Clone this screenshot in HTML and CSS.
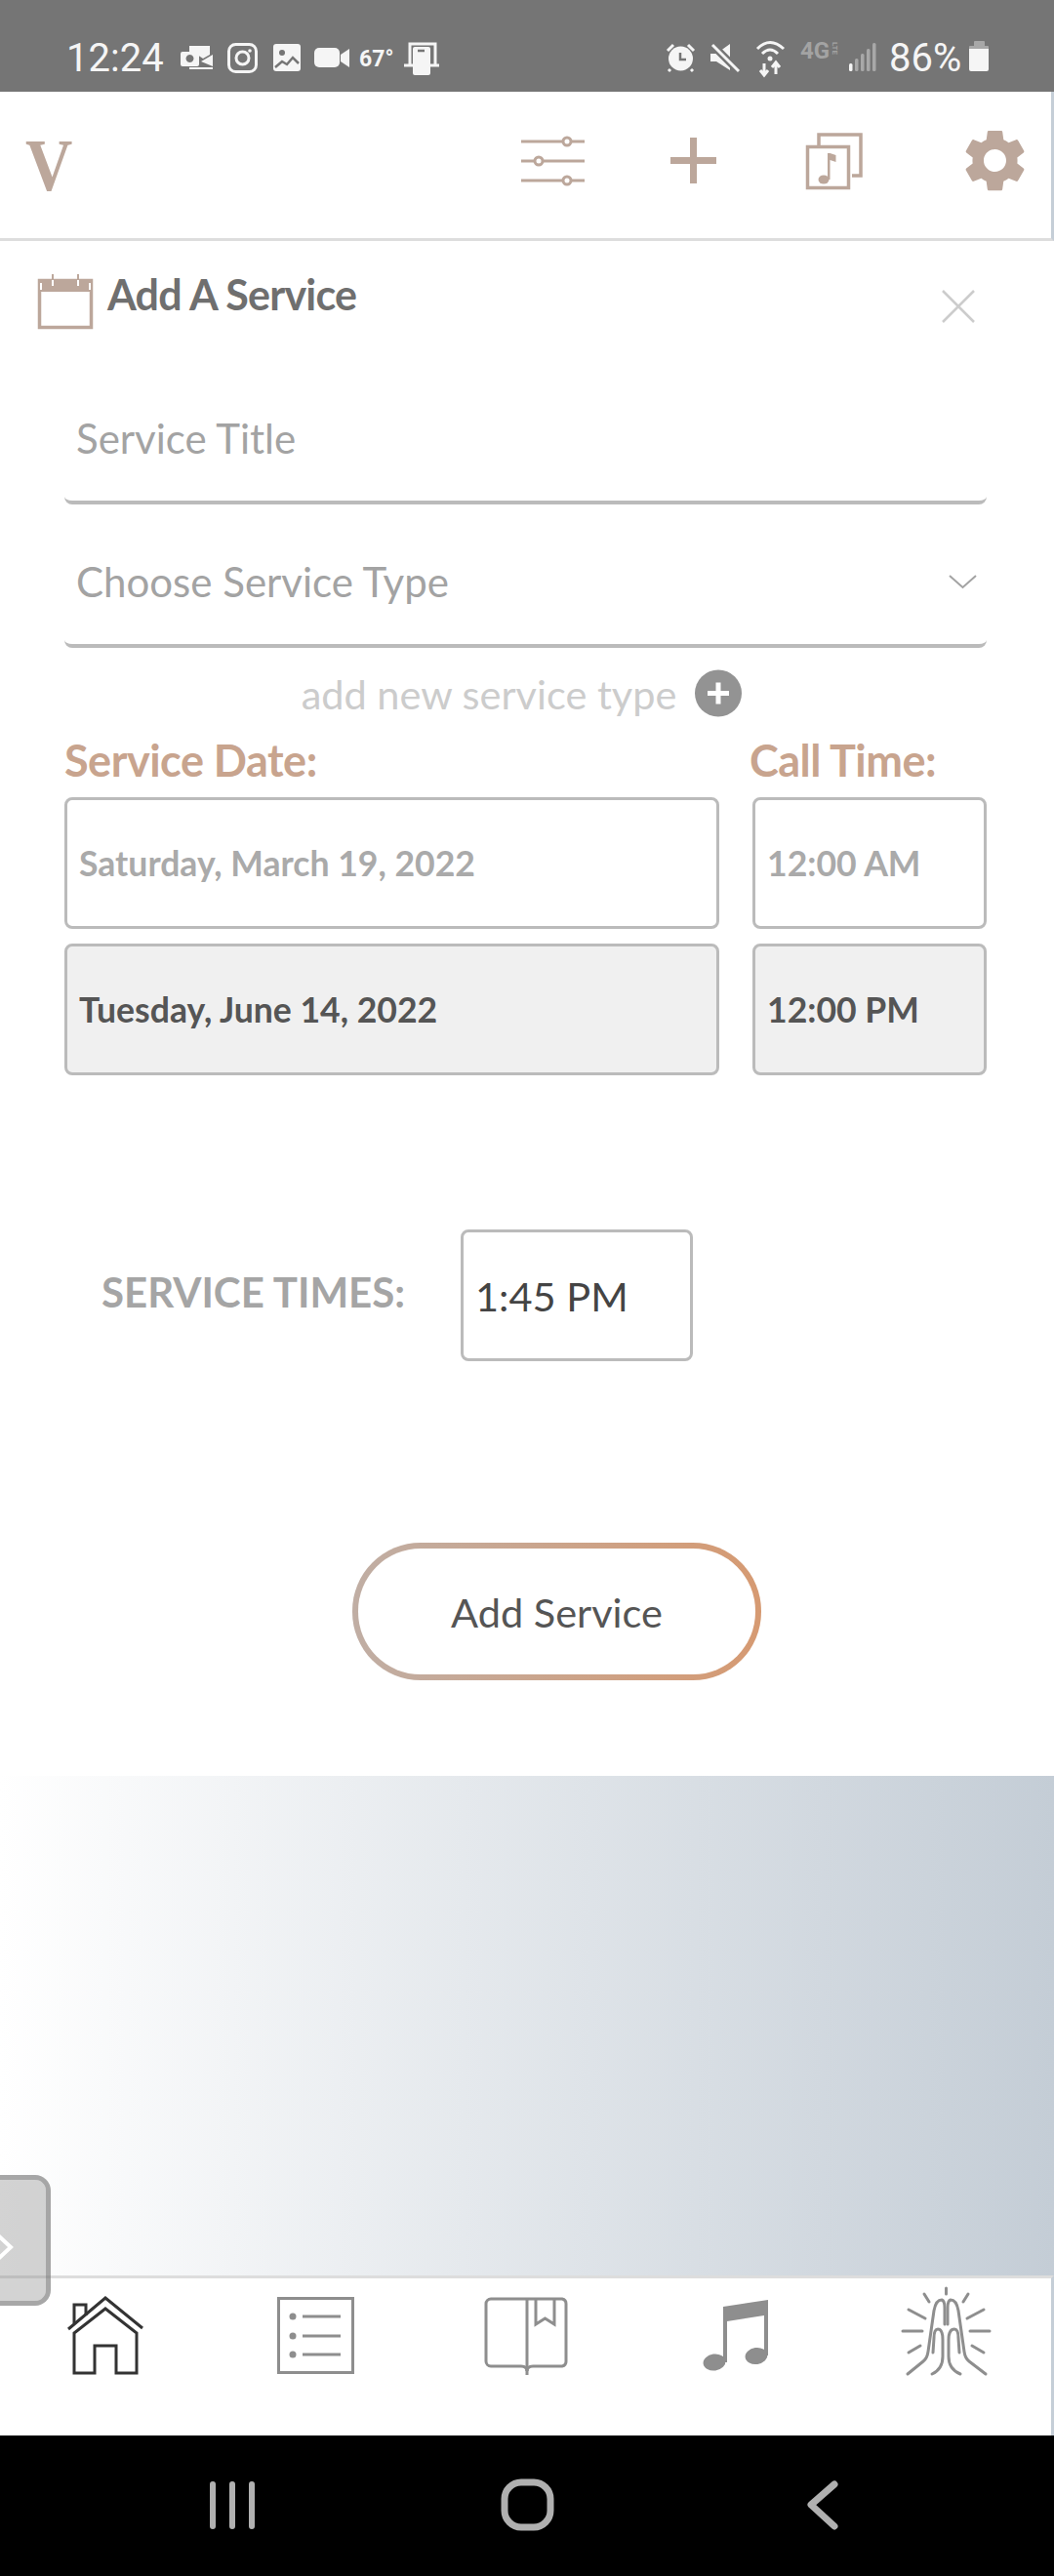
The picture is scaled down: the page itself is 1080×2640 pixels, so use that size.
FILE: index.html
```html
<!DOCTYPE html>
<html lang="en">
  <head>
    <meta charset="UTF-8" />
    <title>Add A Service</title>
    <link rel="stylesheet" href="styles.css">
  </head>
  <body>
    <div class="page">

      <!-- Status bar: svg viewBoxes use the screen coordinates -->
      <div class="status">
        <span class="st-time">12:24</span>
        <svg width="50" height="40" viewBox="176 40 50 40" class="st-fill">
          <path d="M194 47h21v9l-7 4-6-4h-8z"/>
          <path d="M206 63l12-7v12z"/>
          <path d="M194 69h24v2h-24z"/>
          <path fill-rule="evenodd" d="M187 53h15a2 2 0 0 1 2 2v11a2 2 0 0 1-2 2h-15a2 2 0 0 1-2-2v-11a2 2 0 0 1 2-2zM194.500 56a4 4 0 1 0 .01 0z"/>
        </svg>
        <svg width="46" height="40" viewBox="226 40 46 40" class="st-line">
          <rect x="234.500" y="45.500" width="28" height="28" rx="7"/>
          <circle cx="248.500" cy="59.500" r="6.500"/>
          <circle cx="256" cy="52" r="1.800" class="st-fill"/>
        </svg>
        <svg width="44" height="40" viewBox="272 40 44 40" class="st-fill">
          <rect x="280" y="45" width="28" height="28" rx="3"/>
          <circle cx="289" cy="54" r="3" class="st-gray"/>
          <path d="M282 69l7-6 5 3 6-7 6 6" class="st-gap"/>
        </svg>
        <svg width="48" height="40" viewBox="316 40 48 40" class="st-fill">
          <rect x="322" y="49" width="26" height="20" rx="5"/>
          <path d="M349 56l9-6v19l-9-6z"/>
        </svg>
        <span class="st-temp">67°</span>
        <svg width="44" height="40" viewBox="410 40 44 40" class="st-line">
          <path d="M420 67V45h26v22"/>
          <path d="M414 67h10M441 67h9"/>
          <rect x="423" y="48" width="18" height="29" rx="2" class="st-fill"/>
          <path d="M428 52h7" class="st-gap"/>
        </svg>

        <div class="st-right">
          <svg width="42" height="40" viewBox="678 40 42 40" class="st-fill">
            <circle cx="697.500" cy="60" r="12.500"/>
            <path d="M684 52l6-6M711 52l-6-6M687 71l-2 2M708 71l2 2" class="st-line"/>
            <path d="M697 54v7h6" class="st-gap"/>
          </svg>
          <svg width="46" height="40" viewBox="720 40 46 40" class="st-fill">
            <path d="M728 55h6l14-10v27l-14-9h-6z"/>
            <path d="M730 46l27 27" class="st-gap-wide"/>
            <path d="M730 46l27 27" class="st-line"/>
          </svg>
          <svg width="49" height="40" viewBox="766 40 49 40" class="st-line">
            <path d="M776 50q13-13 27 0M781 55q8-8 16 0"/>
            <circle cx="789" cy="60" r="2.500" class="st-fill"/>
            <path d="M783 65v11M779 72l4 5 4-5M795 76v-11M791 69l4-5 4 5"/>
          </svg>
          <svg width="51" height="60" viewBox="815 30 51 60" class="st-dim">
            <text x="820" y="60" class="st-4g">4G</text>
            <text x="853" y="43" class="st-lte" transform="rotate(90 853 43)">LTE</text>
          </svg>
          <svg width="39" height="40" viewBox="866 40 39 40" class="st-fill">
            <rect x="870" y="65" width="3.500" height="8" rx="1.500"/>
            <rect x="876" y="60" width="3.500" height="13" rx="1.500" class="st-bar"/>
            <rect x="882" y="55" width="3.500" height="18" rx="1.500" class="st-bar"/>
            <rect x="888" y="50" width="3.500" height="23" rx="1.500" class="st-bar"/>
            <rect x="894" y="44" width="3.500" height="29" rx="1.500" class="st-bar"/>
          </svg>
          <span class="st-pct">86%</span>
          <svg width="30" height="40" viewBox="988 40 30 40" class="st-fill">
            <path d="M999 42h9a1 1 0 0 1 1 1v4h3a1 1 0 0 1 1 1v3h-20v-3a1 1 0 0 1 1-1h4v-4a1 1 0 0 1 1-1z" class="st-bar"/>
            <path d="M993 50h20v21a2 2 0 0 1-2 2h-16a2 2 0 0 1-2-2z"/>
          </svg>
        </div>
      </div>

      <!-- App header -->
      <div class="topbar">
        <span class="logo">V</span>
        <div class="topbar-icons">
          <svg width="140" height="70" viewBox="500 134 140 70" class="tan-line">
            <path d="M534 145h42M586 145h13M534 165h13M557 165h42M534 185h42M586 185h13"/>
            <circle cx="581" cy="145" r="4"/>
            <circle cx="552" cy="165" r="4"/>
            <circle cx="581" cy="185" r="4"/>
          </svg>
          <svg width="140" height="70" viewBox="640 134 140 70" class="tan-fill">
            <path d="M707 141h7v20h20v7h-20v20h-7v-20h-20v-7h20z"/>
          </svg>
          <svg width="150" height="70" viewBox="780 134 150 70" class="tan-line tan-thick">
            <path d="M839 149v-11h43v42h-9"/>
            <rect x="827.500" y="150.500" width="42" height="42"/>
            <ellipse cx="844" cy="184" rx="5.500" ry="4.500" class="tan-fill"/>
            <path d="M848 184v-27h2.500l6 2v7l-6-2v20z" class="tan-fill"/>
          </svg>
          <svg width="147" height="70" viewBox="930 134 147 70" class="tan-fill">
            <path transform="translate(981.100 126.100) scale(3.200)" d="M19.140 12.940c.04-.3.06-.61.06-.94 0-.32-.02-.64-.07-.94l2.030-1.580c.18-.14.23-.41.12-.61l-1.920-3.320c-.12-.22-.37-.29-.59-.22l-2.390.96c-.5-.38-1.030-.7-1.620-.94l-.36-2.540c-.04-.24-.24-.41-.48-.41h-3.840c-.24 0-.43.17-.47.41l-.36 2.540c-.59.24-1.130.57-1.620.94l-2.390-.96c-.22-.08-.47 0-.59.22L2.740 8.870c-.12.21-.08.47.12.61l2.030 1.580c-.05.3-.09.63-.09.94s.02.64.07.94l-2.030 1.580c-.18.14-.23.41-.12.61l1.920 3.320c.12.22.37.29.59.22l2.390-.96c.5.38 1.030.7 1.620.94l.36 2.54c.05.24.24.41.48.41h3.840c.24 0 .44-.17.47-.41l.36-2.540c.59-.24 1.130-.56 1.620-.94l2.390.96c.22.08.47 0 .59-.22l1.920-3.320c.12-.22.07-.47-.12-.61l-2.010-1.580zM12 15.600c-1.980 0-3.600-1.620-3.600-3.600s1.620-3.600 3.600-3.600 3.600 1.620 3.600 3.600-1.620 3.600-3.600 3.600z"/>
          </svg>
        </div>
      </div>

      <!-- Form -->
      <div class="form">
        <div class="form-title">
          <svg width="58" height="58" viewBox="38 280 58 58" class="tan-line tan-thick">
            <rect x="40.500" y="287.500" width="53" height="48"/>
            <rect x="40" y="286" width="54" height="13" class="tan-fill"/>
            <path d="M42 290v7M92 290v7" class="white-line"/>
            <path d="M54 281v6M80 281v6" class="tan-thin"/>
            <path d="M54 287v6M80 287v6" class="white-line"/>
          </svg>
          <h1>Add A Service</h1>
          <svg width="40" height="40" viewBox="963 294 40 40" class="close">
            <path d="M967 298l32 32M999 298l-32 32"/>
          </svg>
        </div>

        <div class="field">Service Title</div>
        <div class="field field-select">
          Choose Service Type
          <svg width="32" height="20" viewBox="973 586 32 20" class="chevron">
            <path d="M975 590l13.500 12 13.500-12"/>
          </svg>
        </div>

        <div class="add-type">
          <span>add new service type</span>
          <svg width="48" height="49" viewBox="711 686 48 49">
            <circle cx="735" cy="710.500" r="24" class="plus-disc"/>
            <path d="M724 710.500h22M735 699.500v22" class="plus-mark"/>
          </svg>
        </div>

        <div class="dates">
          <div class="dates-label">Service Date:</div>
          <div class="dates-label dates-label-call">Call Time:</div>
          <div class="box">Saturday, March 19, 2022</div>
          <div class="box">12:00 AM</div>
          <div class="box box-on">Tuesday, June 14, 2022</div>
          <div class="box box-on">12:00 PM</div>
        </div>

        <div class="times">
          <div class="times-label">SERVICE TIMES:</div>
          <div class="box times-box">1:45 PM</div>
        </div>

        <div class="submit">Add Service</div>
      </div>

      <div class="band"></div>

      <!-- Bottom tabs -->
      <div class="tabs">
        <svg width="216" height="161" viewBox="0 2335 216 161" class="tab-home">
          <path d="M70 2387l38-32 38 31"/>
          <path d="M76 2432v-41l32-25 32 25v41h-21v-28h-22v28z"/>
          <path d="M76 2381v-19h12v11"/>
        </svg>
        <svg width="216" height="161" viewBox="216 2335 216 161" class="tab-icon">
          <rect x="285.500" y="2355.500" width="76" height="76"/>
          <circle cx="300" cy="2374" r="3.500" class="tab-fill"/>
          <circle cx="300" cy="2394" r="3.500" class="tab-fill"/>
          <circle cx="300" cy="2413" r="3.500" class="tab-fill"/>
          <path d="M310 2374h39M310 2394h39M310 2413h39"/>
        </svg>
        <svg width="216" height="161" viewBox="432 2335 216 161" class="tab-icon">
          <path d="M540 2356h-37a5 5 0 0 0-5 5v59a5 5 0 0 0 5 5h31q6 0 6 5v4"/>
          <path d="M540 2356h36a5 5 0 0 1 4 5v59a5 5 0 0 1-4 5h-30q-6 0-6 5"/>
          <path d="M540 2356v74"/>
          <path d="M549 2356v26l9.500-6 9.500 6v-26"/>
        </svg>
        <svg width="216" height="161" viewBox="648 2335 216 161" class="tab-fill">
          <path d="M741 2364l46-7v57h-4v-41l-38 6v42h-4z"/>
          <ellipse cx="732" cy="2421" rx="11.500" ry="8.500" transform="rotate(-8 732 2421)"/>
          <ellipse cx="775" cy="2414.500" rx="11.500" ry="8.500" transform="rotate(-8 775 2414.500)"/>
        </svg>
        <svg width="213" height="161" viewBox="864 2335 213 161" class="tab-icon tab-round">
          <path d="M969.500 2345v6M947 2351l5 8M992 2351l-5 8M931 2367l17 9M1008 2367l-17 9M925 2389h20M994 2389h20M931 2411l12-7M1008 2411l-12-7"/>
          <path d="M930 2433l16-13q4-3 5-10l6-42q2-11 8-11 3 1 3 8v17"/>
          <path d="M1010 2433l-17-13q-4-3-5-10l-6-42q-2-11-8-11-3 1-3 8v17"/>
          <path d="M955 2433q11-5 11-18v-17q0-11-5-11-4 0-4 9l-1 15"/>
          <path d="M984 2433q-12-5-12-18v-17q0-11 6-11 4 0 4 9l1 15"/>
        </svg>
      </div>

      <!-- Android keys -->
      <svg class="keys" width="1080" height="144" viewBox="0 2496 1080 144">
        <rect x="215" y="2543" width="6" height="49" rx="3" class="key-bar"/>
        <rect x="235" y="2543" width="6" height="49" rx="3" class="key-bar"/>
        <rect x="255" y="2543" width="6" height="49" rx="3" class="key-bar"/>
        <rect x="517" y="2544" width="47" height="46" rx="17" class="key-line"/>
        <path d="M855 2546l-24 21 24 22" class="key-line"/>
      </svg>

      <!-- Drawer handle sits over the band and the tabs -->
      <div class="drawer">
        <svg width="14" height="34" viewBox="0 2284 14 34">
          <path d="M-4 2287l15 14-15 14"/>
        </svg>
      </div>
    </div>
  </body>
</html>
```

FILE: styles.css
```css
* {
  box-sizing: border-box;
}

body {
  margin: 0;
  font-family: Lato, "Liberation Sans", sans-serif;
  background: #fff;
}

svg {
  display: block;
  flex: none;
}

.page {
  position: relative;
  width: 1080px;
  height: 2640px;
  overflow: hidden;
  display: flex;
  flex-direction: column;
}

/* Status bar */
.status {
  height: 94px;
  padding: 40px 62px 14px 68px;
  display: flex;
  align-items: center;
  background: #757575;
  color: #f5f5f5;
  font-family: Roboto, sans-serif;
}

.st-time {
  width: 108px;
  font-size: 40px;
  line-height: 40px;
}

.st-temp {
  width: 46px;
  padding-left: 4px;
  font-size: 23px;
  font-weight: 700;
}

.st-right {
  margin-left: auto;
  display: flex;
  align-items: center;
}

.st-pct {
  width: 83px;
  padding-left: 6px;
  font-size: 40px;
  line-height: 40px;
}

.st-fill {
  fill: #f5f5f5;
  stroke: none;
}

.st-line {
  fill: none;
  stroke: #f5f5f5;
  stroke-width: 3;
}

.st-gray {
  fill: #757575;
}

.st-gap {
  fill: none;
  stroke: #757575;
  stroke-width: 2.5;
}

.st-gap-wide {
  fill: none;
  stroke: #757575;
  stroke-width: 8;
}

.st-bar {
  fill: #a8a8a8;
}

.st-dim {
  fill: #a3a3a3;
}

.st-4g {
  font-size: 24px;
  font-weight: 700;
}

.st-lte {
  font-size: 8px;
  font-weight: 700;
}

/* Header */
.topbar {
  height: 153px;
  padding-left: 26px;
  display: flex;
  align-items: center;
  border-right: 3px solid #c5ced7;
  border-bottom: 3px solid #dddddd;
}

.logo {
  display: inline-block;
  font-family: "Liberation Serif", serif;
  font-size: 76px;
  font-weight: 700;
  line-height: 1;
  color: #bca79b;
  transform: scaleX(0.88);
  transform-origin: left center;
}

.topbar-icons {
  margin-left: auto;
  display: flex;
}

.tan-fill {
  fill: #bca79b;
  stroke: none;
}

.tan-line {
  fill: none;
  stroke: #bca79b;
  stroke-width: 3;
}

.tan-thick {
  stroke-width: 3.5;
}

.tan-thin {
  stroke-width: 2;
}

.white-line {
  fill: none;
  stroke: #fff;
  stroke-width: 2;
}

/* Form */
.form {
  flex: 1;
  padding: 0 69px 0 66px;
}

.form-title {
  height: 178px;
  margin: 0 0 0 -28px;
  padding-top: 33px;
  display: flex;
  align-items: flex-start;
}

.form-title h1 {
  margin: -3px 0 0 14px;
  font-size: 43px;
  font-weight: 700;
  line-height: 50px;
  letter-spacing: -0.8px;
  color: #6f6f6f;
}

.close {
  margin: 14px 9px 0 auto;
  fill: none;
  stroke: #cccccc;
  stroke-width: 2.5;
}

.field {
  padding: 0 12px 40px;
  display: flex;
  align-items: center;
  justify-content: space-between;
  font-size: 42px;
  line-height: 48px;
  color: #a3a3a3;
  border-bottom: 4px solid #bbbbbb;
  border-radius: 0 0 8px 8px;
}

.field-select {
  margin-top: 55px;
}

.chevron {
  margin-right: -4px;
  fill: none;
  stroke: #a3a3a3;
  stroke-width: 2;
}

.add-type {
  height: 49px;
  margin-top: 22px;
  padding-right: 8px;
  display: flex;
  align-items: center;
  justify-content: center;
  gap: 19px;
  font-size: 41.5px;
  color: #cccccc;
}

.plus-disc {
  fill: #939393;
}

.plus-mark {
  fill: none;
  stroke: #fff;
  stroke-width: 5;
}

.dates {
  margin-top: 21px;
  display: grid;
  grid-template-columns: 671px 240px;
  column-gap: 34px;
  row-gap: 15px;
}

.dates-label {
  font-size: 45px;
  font-weight: 700;
  line-height: 46px;
  letter-spacing: -0.5px;
  color: #c8a48e;
}

.dates-label-call {
  margin-left: -3px;
}

.box {
  height: 135px;
  padding-left: 12px;
  display: flex;
  align-items: center;
  font-size: 35.6px;
  font-weight: 700;
  color: #aaaaaa;
  border: 3px solid #bbbbbb;
  border-radius: 8px;
}

.box-on {
  color: #555555;
  background: #f0f0f0;
}

.times {
  margin-top: 158px;
  padding-left: 38px;
  display: flex;
  align-items: center;
}

.times-label {
  width: 368px;
  margin-top: -8px;
  font-size: 42px;
  font-weight: 700;
  color: #a5a5a5;
}

.times-box {
  width: 238px;
  font-size: 41.5px;
  font-weight: 400;
  color: #444444;
}

.submit {
  width: 419px;
  height: 141px;
  margin: 186px 0 0 295px;
  display: flex;
  align-items: center;
  justify-content: center;
  font-size: 41.5px;
  color: #555555;
  border: 6px solid transparent;
  border-radius: 70px;
  background: linear-gradient(#fff, #fff) padding-box,
    linear-gradient(90deg, #c0aea4, #d69a72) border-box;
}

.band {
  height: 512px;
  background: linear-gradient(90deg, #ffffff, #c4cdd6);
}

/* Bottom tabs */
.tabs {
  height: 164px;
  display: flex;
  border-top: 3px solid #dddddd;
  border-right: 3px solid #c5ced7;
}

.tab-home {
  fill: none;
  stroke: #333333;
  stroke-width: 3;
}

.tab-icon {
  fill: none;
  stroke: #8e8e8e;
  stroke-width: 3;
}

.tab-fill {
  fill: #8e8e8e;
  stroke: none;
}

.tab-round {
  stroke-linecap: round;
  stroke-linejoin: round;
}

/* Android keys */
.keys {
  background: #000;
}

.key-bar {
  fill: #b0b0b0;
}

.key-line {
  fill: none;
  stroke: #b0b0b0;
  stroke-width: 7;
  stroke-linecap: round;
  stroke-linejoin: round;
}

/* Drawer handle */
.drawer {
  position: absolute;
  left: -20px;
  top: 2229px;
  width: 72px;
  height: 134px;
  padding: 52px 0 0 20px;
  border: 5px solid rgba(120, 120, 120, 0.65);
  border-radius: 16px;
  background: rgba(140, 140, 140, 0.38);
  background-clip: padding-box;
}

.drawer svg {
  margin-left: -5px;
  fill: none;
  stroke: #fff;
  stroke-width: 4;
}
```
